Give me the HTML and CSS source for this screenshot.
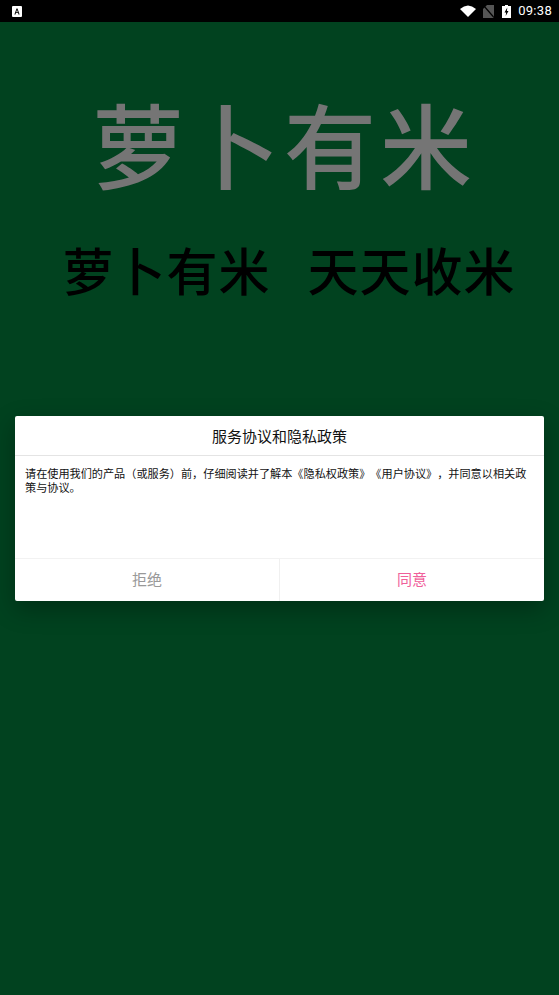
FILE: index.html
```html
<!DOCTYPE html>
<html lang="zh-CN">
<head>
<meta charset="utf-8">
<title>萝卜有米</title>
<link rel="stylesheet" href="styles.css">
</head>
<body>
<div class="screen">
  <header class="status">
    <svg class="a-icon" viewBox="0 0 10 11" width="10" height="11"><rect width="10" height="11" rx="1" fill="#fff"/><path d="M2.4 8.500 4.500 2.500h1L7.600 8.500H6.500L6.100 7.100H3.900L3.500 8.500ZM4.200 6.200h1.600L5 3.800Z" fill="#000"/></svg>
    <div class="status-right">
      <svg class="wifi" viewBox="0 0 16 12" width="16" height="12"><path d="M0 4Q8-3 16 4L8 12Z" fill="#fff"/></svg>
      <svg class="nosim" viewBox="0 0 11 13" width="11" height="13"><path d="M0 13V4L4 0H11V13Z" fill="#555"/><path d="M1 1 11 12.500" stroke="#000" stroke-width="1.200"/></svg>
      <svg class="batt" viewBox="0 0 9 13" width="9" height="13"><path d="M3 0H6V1H9V13H0V1H3Z" fill="#fff"/><path d="M5.300 2.500 2.500 7.500H4.100L3.700 11 6.500 6H4.900Z" fill="#000"/></svg>
      <span class="time">09:38</span>
    </div>
  </header>
  <main class="splash">
    <h1 class="brand">萝卜有米</h1>
    <p class="slogan"><span>萝卜有米</span><span>天天收米</span></p>
  </main>
  <section class="dialog">
    <h2 class="dialog-title">服务协议和隐私政策</h2>
    <div class="dialog-body">请在使用我们的产品（或服务）前，仔细阅读并了解本《隐私权政策》《用户协议》，并同意以相关政策与协议。</div>
    <footer class="dialog-actions">
      <button class="action reject">拒绝</button>
      <button class="action agree">同意</button>
    </footer>
  </section>
</div>
</body>
</html>
```
FILE: styles.css
```css
* { box-sizing: border-box; }
html, body { margin: 0; padding: 0; }
body { font-family: "Noto Sans CJK SC", "Noto Sans", sans-serif; }
.screen {
  position: relative;
  width: 559px;
  height: 995px;
  overflow: hidden;
  background: #01421f;
}
.status {
  height: 22px;
  background: #000;
  display: flex;
  align-items: center;
  justify-content: space-between;
  padding: 0 7px 0 12px;
}
.status-right { display: flex; align-items: center; }
.wifi { margin-right: 7px; }
.nosim { margin-right: 8px; }
.batt { margin-right: 7px; }
.time { color: #fff; font: 13px/22px Roboto, sans-serif; letter-spacing: 0.3px; }
.splash { display: flex; flex-direction: column; align-items: center; }
.brand {
  margin: 60px 0 0;
  padding-left: 9px;
  font-size: 92px;
  letter-spacing: 4px;
  line-height: 120px;
  font-weight: 500;
  color: #757575;
}
.slogan {
  margin: 32px 0 0;
  padding-left: 19px;
  display: flex;
  gap: 37px;
  font-size: 51px;
  letter-spacing: 1px;
  line-height: 70px;
  font-weight: 500;
  color: #000;
}
.dialog {
  position: absolute;
  left: 15px;
  top: 416px;
  width: 529px;
  height: 185px;
  display: flex;
  flex-direction: column;
  background: #fff;
  border-radius: 2px;
  box-shadow: 0 8px 24px rgba(0, 0, 0, 0.3);
}
.dialog-title {
  margin: 0;
  height: 40px;
  border-bottom: 1px solid #e4e4e4;
  text-align: center;
  font-size: 15px;
  line-height: 39px;
  font-weight: 400;
  color: #111;
}
.dialog-body {
  flex: 1;
  padding: 11px 10px 0;
  font-size: 11.150px;
  line-height: 13.500px;
  color: #111;
  font-feature-settings: "chws" 0;
  text-spacing-trim: space-all;
}
.dialog-actions {
  height: 43px;
  display: flex;
  border-top: 1px solid #f2f2f2;
}
.action {
  flex: 1;
  border: 0;
  background: none;
  padding: 0 0 3px;
  font-family: inherit;
  font-size: 15px;
}
.reject { color: #999; border-right: 1px solid #f0f0f0; }
.agree { color: #f0609a; }
```
